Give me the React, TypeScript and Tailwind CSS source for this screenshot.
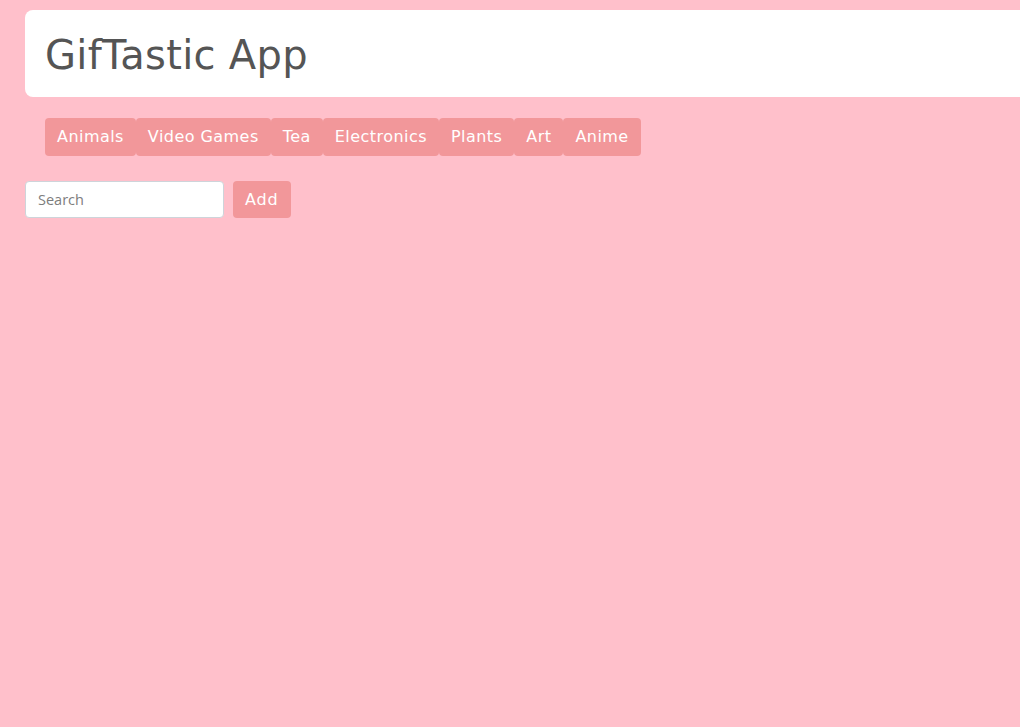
import React from "react";

const topics = ["Animals", "Video Games", "Tea", "Electronics", "Plants", "Art", "Anime"];

export default function App() {
  return (
    <div className="min-h-[727px] w-full bg-[#ffc0cb] pt-[10px] pl-[25px] overflow-hidden" style={{ fontFamily: '"DejaVu Sans", sans-serif' }}>
      <div className="bg-white rounded-l-[8px] h-[87px] pl-[20px] flex items-center -mr-[20px]">
        <h1 className="text-[40px] leading-[48px] text-[#555555] font-normal tracking-[0.3px] pt-[2px]">GifTastic App</h1>
      </div>
      <div className="flex pl-[20px] mt-[21px]">
        {topics.map((t) => (
          <button key={t} className="h-[38px] px-[12px] rounded-[4px] bg-[#f2979a] text-white text-[16px] leading-[24px] tracking-[0.45px]">
            {t}
          </button>
        ))}
      </div>
      <div className="flex items-center gap-[9px] mt-[25px]">
        <input
          placeholder="Search"
          className="w-[199px] h-[37px] rounded-[4px] border border-[#ced4da] bg-white px-[12px] text-[14.5px] placeholder:text-[#7d7d7d] outline-none"
          style={{ fontFamily: '"Open Sans", sans-serif' }}
        />
        <button className="h-[37px] px-[12px] rounded-[4px] bg-[#f2979a] text-white text-[16px] tracking-[0.9px]">Add</button>
      </div>
    </div>
  );
}
